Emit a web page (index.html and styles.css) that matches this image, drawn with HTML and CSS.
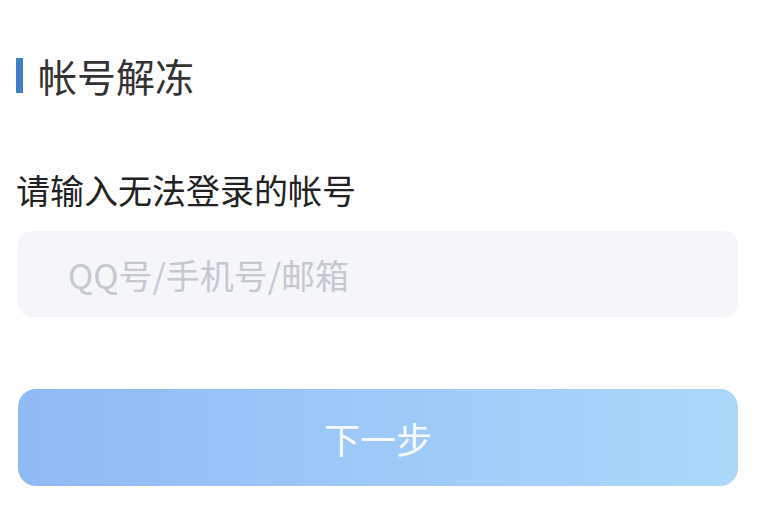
FILE: index.html
```html
<!DOCTYPE html>
<html lang="zh-CN">
<head>
<meta charset="utf-8">
<link rel="stylesheet" href="styles.css">
</head>
<body>
<main class="page">
  <h1 class="title"><span class="title-bar"></span><span class="title-text">帐号解冻</span></h1>
  <label class="label" for="acc">请输入无法登录的帐号</label>
  <input class="field" id="acc" type="text" placeholder="QQ号/手机号/邮箱">
  <button class="next" type="button">下一步</button>
</main>
</body>
</html>
```
FILE: styles.css
```css
html, body {
  margin: 0;
  padding: 0;
  background: #ffffff;
}
body {
  font-family: "Noto Sans CJK SC", "Noto Sans", sans-serif;
  width: 768px;
  height: 510px;
  overflow: hidden;
}
.page {
  display: flex;
  flex-direction: column;
  padding: 55px 30px 0 18px;
}
.title {
  display: flex;
  align-items: center;
  gap: 15px;
  margin: 0;
  font-weight: 400;
  font-size: 39px;
  line-height: 40px;
  color: #333333;
}
.title-bar {
  width: 7px;
  height: 35px;
  margin-left: -2px;
  background: #3d7fc1;
}
.label {
  margin-top: 75px;
  margin-left: -2px;
  font-size: 34px;
  line-height: 40px;
  color: #222222;
}
.field {
  margin-top: 21px;
  height: 86px;
  box-sizing: border-box;
  border: none;
  outline: none;
  border-radius: 14px;
  background: #f5f6fa;
  padding: 0 0 0 50px;
  font-family: inherit;
  font-size: 34px;
  color: #333;
}
.field::placeholder {
  color: #c5c8cf;
}
.next {
  margin-top: 72px;
  height: 97px;
  border: none;
  border-radius: 18px;
  background: linear-gradient(90deg, #8fbaf4 0%, #9ec9f8 50%, #acd8fa 100%);
  color: rgba(255, 255, 255, 0.92);
  font-family: inherit;
  font-size: 36px;
  padding: 0;
}
```
